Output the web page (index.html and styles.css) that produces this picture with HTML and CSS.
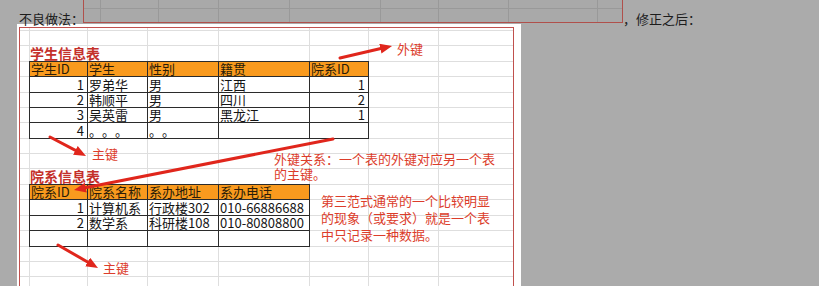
FILE: index.html
```html
<!DOCTYPE html>
<html lang="zh-CN">
<head>
<meta charset="utf-8">
<title>第三范式</title>
<link rel="stylesheet" href="styles.css">
</head>
<body>
<div class="topline">
  <span class="lead">不良做法：</span>
  <div class="oldshot"></div>
  <span class="tail">，修正之后：</span>
</div>
<div class="panel">
  <div class="frame">
    <div class="title">学生信息表</div>
    <div class="tbl tbl1">
      <div class="c h">学生ID</div><div class="c h">学生</div><div class="c h">性别</div><div class="c h">籍贯</div><div class="c h">院系ID</div>
      <div class="c n">1</div><div class="c">罗弟华</div><div class="c">男</div><div class="c">江西</div><div class="c n">1</div>
      <div class="c n">2</div><div class="c">韩顺平</div><div class="c">男</div><div class="c">四川</div><div class="c n">2</div>
      <div class="c n">3</div><div class="c">吴英雷</div><div class="c">男</div><div class="c">黑龙江</div><div class="c n">1</div>
      <div class="c n">4</div><div class="c">。。。</div><div class="c">。。</div><div class="c"></div><div class="c"></div>
    </div>
    <div class="title title2">院系信息表</div>
    <div class="tbl tbl2">
      <div class="c h">院系ID</div><div class="c h">院系名称</div><div class="c h">系办地址</div><div class="c h">系办电话</div>
      <div class="c n">1</div><div class="c">计算机系</div><div class="c">行政楼302</div><div class="c">010-66886688</div>
      <div class="c n">2</div><div class="c">数学系</div><div class="c">科研楼108</div><div class="c">010-80808800</div>
      <div class="c"></div><div class="c"></div><div class="c"></div><div class="c"></div>
    </div>
  </div>
</div>

<span class="note note-fk">外键</span>
<span class="note note-pk1">主键</span>
<span class="note note-rel">外键关系：一个表的外键对应另一个表<br>的主键。</span>
<span class="note note-3nf">第三范式通常的一个比较明显<br>的现象（或要求）就是一个表<br>中只记录一种数据。</span>
<span class="note note-pk2">主键</span>

<svg class="arrows" width="819" height="286" viewBox="0 0 819 286">
  <defs>
    <marker id="ah" markerUnits="userSpaceOnUse" markerWidth="12" markerHeight="10" viewBox="0 0 12 10" refX="6" refY="5" orient="auto">
      <path d="M0,0 L12,5 L0,10 z" fill="#e0261c"/>
    </marker>
  </defs>
  <g stroke="#e0261c" stroke-width="3" stroke-linecap="round" fill="none">
    <line x1="340" y1="58" x2="386.2" y2="47.3" marker-end="url(#ah)"/>
    <line x1="50" y1="137" x2="80.7" y2="153.2" marker-end="url(#ah)"/>
    <line x1="333" y1="139" x2="79.9" y2="188.8" marker-end="url(#ah)"/>
    <line x1="58" y1="245" x2="92.8" y2="265" marker-end="url(#ah)"/>
  </g>
</svg>
</body>
</html>
```
FILE: styles.css
```css
html, body {
  margin: 0;
  padding: 0;
}
body {
  position: relative;
  width: 819px;
  height: 286px;
  overflow: hidden;
  background: #ababab;
  font-family: "Noto Sans CJK SC", "Noto Sans", sans-serif;
  text-spacing-trim: space-all;
}
.topline {
  display: flex;
  height: 24px;
  padding-left: 19px;
}
.lead, .tail {
  padding-top: 11px;
  font-size: 13px;
  line-height: 16px;
  height: 13px;
  color: #1c1c1c;
  white-space: nowrap;
}
.lead {
  width: 64px;
}
.oldshot {
  --g: linear-gradient(#999, #999);
  width: 540px;
  height: 23px;
  box-sizing: border-box;
  border: 1px solid #b0504b;
  border-top: none;
  background-color: #a9a9a9;
  background-image: var(--g), var(--g), var(--g), var(--g), var(--g), var(--g), var(--g), var(--g), var(--g);
  background-repeat: no-repeat;
  background-size: 1px 100%, 1px 100%, 1px 100%, 1px 100%, 1px 100%, 1px 100%, 1px 100%, 1px 100%, 100% 1px;
  background-position: 16px 0, 74px 0, 134px 0, 205px 0, 296px 0, 354px 0, 424px 0, 513px 0, 0 8px;
}
.panel {
  margin-left: 17px;
  width: 504px;
  height: 262px;
  box-sizing: border-box;
  padding: 3px 7px 0 2px;
  background: #fff;
}
.frame {
  --g: linear-gradient(#dedede, #dedede);
  box-sizing: border-box;
  height: 259px;
  padding-left: 9px;
  border: 1px solid #c0504d;
  border-bottom: none;
  background-color: #fff;
  background-repeat: no-repeat;
  background-image:
    var(--g), var(--g), var(--g), var(--g), var(--g), var(--g), var(--g),
    var(--g), var(--g), var(--g), var(--g), var(--g), var(--g), var(--g), var(--g), var(--g),
    var(--g), var(--g), var(--g), var(--g), var(--g), var(--g), var(--g), var(--g);
  background-size:
    1px 100%, 1px 100%, 1px 100%, 1px 100%, 1px 100%, 1px 100%, 1px 100%,
    100% 1px, 100% 1px, 100% 1px, 100% 1px, 100% 1px, 100% 1px, 100% 1px, 100% 1px, 100% 1px,
    100% 1px, 100% 1px, 100% 1px, 100% 1px, 100% 1px, 100% 1px, 100% 1px, 100% 1px;
  background-position:
    9px 0, 67px 0, 127px 0, 198px 0, 289px 0, 348px 0, 418px 0,
    0 2px, 0 17px, 0 33px, 0 48px, 0 64px, 0 79px, 0 94px, 0 110px, 0 125px,
    0 140px, 0 156px, 0 171px, 0 187px, 0 202px, 0 218px, 0 233px, 0 248px;
}
.title {
  margin-top: 17px;
  height: 16px;
  padding-left: 1px;
  font-size: 14px;
  line-height: 16px;
  font-weight: bold;
  color: #c4302b;
}
.title2 {
  margin-top: 29px;
}
.tbl {
  display: grid;
  width: max-content;
  border-top: 1px solid #2b2b2b;
  border-left: 1px solid #2b2b2b;
}
.tbl1 {
  grid-template-columns: 58px 60px 71px 91px 59px;
  grid-template-rows: 15px 16px 15px 15px 16px;
}
.tbl2 {
  grid-template-columns: 58px 60px 71px 91px;
  grid-template-rows: 15px 16px 15px 16px;
}
.c {
  display: flex;
  align-items: center;
  box-sizing: border-box;
  padding-left: 1px;
  border-right: 1px solid #2b2b2b;
  border-bottom: 1px solid #2b2b2b;
  font-size: 13px;
  line-height: 14px;
  color: #151515;
  white-space: nowrap;
}
.h {
  background: #f99a1e;
  color: #2a1c08;
}
.n {
  justify-content: flex-end;
  padding-right: 3px;
}
.note {
  position: absolute;
  color: #dc3d2b;
  font-size: 13px;
  line-height: 15px;
  white-space: nowrap;
}
.note-fk { left: 397px; top: 41px; }
.note-pk1 { left: 92px; top: 146px; }
.note-rel { left: 274px; top: 151px; }
.note-3nf { left: 321px; top: 192px; line-height: 17px; }
.note-pk2 { left: 103px; top: 260px; }
.arrows {
  position: absolute;
  left: 0;
  top: 0;
  pointer-events: none;
}
```
